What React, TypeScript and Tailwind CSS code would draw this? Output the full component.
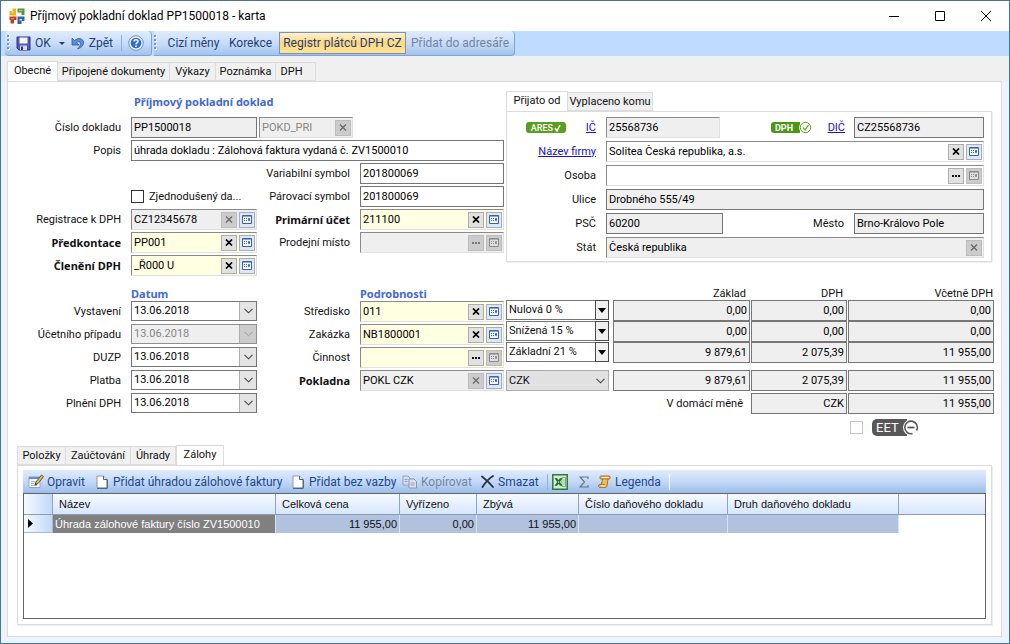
import type { ReactNode } from 'react';
import clsx from 'clsx';

const SANS = 'font-["Roboto","Noto_Sans",sans-serif]';
const STRONG = 'font-bold font-["Noto_Sans","Open_Sans",sans-serif]';

/* ---------- icons ---------- */

function AppLogo() {
  return (
    <svg width="16" height="16" viewBox="0 0 16 16" aria-hidden="true">
      <path d="M.5 3h3V.5h3.500v7h-6.500z" fill="#e9b41c" />
      <path d="M2 4.500h2.500V3H3.500z" fill="#fff0a0" />
      <path d="M8.500.5h7v6.500h-3V4.500H8.500z" fill="#55943a" />
      <path d="M10 2h3.500v1.200H10z" fill="#a9cf90" />
      <path d="M.5 8.500h7v3.500H5v3.500H1.500V12H.5z" fill="#c43d1c" />
      <path d="M2 10h3v1.200H2z" fill="#ea8a62" />
      <path d="M8.500 8.500h7v4.500h-3v3h-4z" fill="#2c64ad" />
      <path d="M10.500 11h2.500v1.500h-2.500z" fill="#d4e6fa" />
    </svg>
  );
}

function SaveIcon() {
  return (
    <svg width="15" height="15" viewBox="0 0 15 15" aria-hidden="true">
      <path d="M1 1h13v13H3l-2-2z" fill="#5259bd" stroke="#2c3188" />
      <path d="M3.500 1.500h8v6h-8z" fill="#f4f7ff" />
      <path d="M4 9.500h7V14H4z" fill="#d5d9ea" />
      <path d="M5 10.500h2V14H5z" fill="#2c3188" />
    </svg>
  );
}

function UndoIcon() {
  return (
    <svg width="14" height="14" viewBox="0 0 14 14" aria-hidden="true">
      <path d="M1 2v7h7L5.600 6.600C8 4.600 10 6 9.300 8.400 9 10 8 11.500 6.500 12.800 10.500 12 12.800 9 12.500 6 12 2.500 7 1.200 3.600 4.600z" fill="#5f8fdb" stroke="#2b57a8" strokeWidth=".8" />
    </svg>
  );
}

function HelpIcon() {
  return (
    <svg width="16" height="16" viewBox="0 0 16 16" aria-hidden="true">
      <circle cx="8" cy="8" r="7.300" fill="#e9f0fb" stroke="#6f8fc4" />
      <circle cx="8" cy="8" r="5.300" fill="#2f6bc8" />
      <path d="M6 6.600C6 4.200 10 4.200 10 6.400 10 7.800 8 7.900 8 9.400" fill="none" stroke="#fff" strokeWidth="1.500" />
      <path d="M7.200 10.400h1.600V12H7.200z" fill="#fff" />
    </svg>
  );
}

function EditIcon() {
  return (
    <svg width="16" height="15" viewBox="0 0 16 15" className="shrink-0" aria-hidden="true">
      <path d="M1 3h11v10.500H1z" fill="#fff" stroke="#8ea6cc" />
      <path d="M1 3h11v2H1z" fill="#5b8ddb" />
      <path d="M3 7.500h5M3 9.500h3M3 11.500h6" stroke="#9cb4dc" />
      <path d="M7 11l1-3 5.500-7 2 1.600-5.500 7z" fill="#e2bd4c" stroke="#54493a" strokeWidth=".9" />
      <path d="M7 11l.6-2 1.500 1.100z" fill="#222" />
    </svg>
  );
}

function PageIcon() {
  return (
    <svg width="12" height="14" viewBox="0 0 12 14" className="shrink-0" aria-hidden="true">
      <path d="M1 1h6.500L11 4.500V13H1z" fill="#fff" stroke="#8b98b0" />
      <path d="M7.500 1v3.500H11" fill="#dfe6f2" stroke="#4e5f80" />
      <path d="M11.300 4.500v8.800H1" fill="none" stroke="#44526e" />
    </svg>
  );
}

function CopyIcon() {
  return (
    <svg width="15" height="14" viewBox="0 0 15 14" className="shrink-0" aria-hidden="true">
      <path d="M1 1h5l2 2v7H1z" fill="#d5deec" stroke="#94a2b8" />
      <path d="M7 4h5l2.500 2.500V13H7z" fill="#dbe3ef" stroke="#8896ae" />
      <path d="M2.500 4.500h3M2.500 6.500h3M8.500 8h4M8.500 10h4" stroke="#94a2b8" />
    </svg>
  );
}

function DeleteIcon() {
  return (
    <svg width="13" height="13" viewBox="0 0 13 13" className="shrink-0" aria-hidden="true">
      <path d="M1 1.500c4 3 8 7 11 10.500M12 1C8 3.500 4 8 1.500 12" fill="none" stroke="#2b3140" strokeWidth="1.800" strokeLinecap="round" />
    </svg>
  );
}

function ExcelIcon() {
  return (
    <svg width="16" height="16" viewBox="0 0 16 16" aria-hidden="true">
      <path d="M.8.8h14.400v14.400H.8z" fill="#d4ecd0" stroke="#2c7a36" strokeWidth="1.500" />
      <path d="M10 3.500h3.500v9H10z" fill="#fff" stroke="#5a9f5f" strokeWidth=".8" />
      <path d="M11 6h2M11 8h2M11 10h2" stroke="#5a9f5f" strokeWidth=".8" />
      <path d="M3 4.500h2l5 7H8zM10 4.500H8l-5 7h2z" fill="#1e6b2b" stroke="#1e6b2b" strokeWidth=".6" />
    </svg>
  );
}

function SigmaIcon() {
  return (
    <svg width="10" height="12" viewBox="0 0 10 12" aria-hidden="true">
      <path d="M9 3V1H1l4.500 5L1 11h8V9" fill="none" stroke="#6b7280" strokeWidth="1.200" />
    </svg>
  );
}

function ScrollIcon() {
  return (
    <svg width="13" height="13" viewBox="0 0 13 13" className="shrink-0" aria-hidden="true">
      <path d="M3 1h8c1.600 0 1.600 3 0 3h-1l-1 6.500c0 1.200-.6 1.900-2 1.900H1.800c-1.600 0-1.600-3 0-3H3.400L4.600 4H3C1.500 4 1.500 1 3 1z" fill="#f6bb55" stroke="#9a6420" strokeWidth=".9" />
      <path d="M4 2.500h6.500M3 11h4" stroke="#fff3cf" />
      <path d="M4.600 4H10M3.400 9.400h3.400" stroke="#9a6420" strokeWidth=".8" />
    </svg>
  );
}

function LookupGlyph({ disabled }: { disabled?: boolean }) {
  const ink = disabled ? '#8b8b8b' : '#3e62a8';
  return (
    <svg width="10" height="9" viewBox="0 0 10 9" aria-hidden="true">
      <path d="M.5.5h9v8h-9z" fill={disabled ? '#dedede' : '#f2f7ff'} stroke={ink} />
      <path d="M1 1h8v1H1z" fill={ink} opacity=".55" />
      <path d="M2 3.500h1M2 5.500h1M4 3.500h1M4 5.500h1" stroke={ink} />
      <path d="M6.500 3.500h1v2h-1z" fill="none" stroke={ink} />
    </svg>
  );
}

function CrossGlyph({ disabled }: { disabled?: boolean }) {
  return (
    <svg width="8" height="7" viewBox="0 0 8 7" aria-hidden="true">
      <path d="M1 .5l6 6M7 .5l-6 6" stroke={disabled ? '#6a6a6a' : '#000'} strokeWidth={disabled ? 1.3 : 1.7} />
    </svg>
  );
}

function DotsGlyph({ disabled }: { disabled?: boolean }) {
  return (
    <svg width="8" height="2" viewBox="0 0 8 2" aria-hidden="true">
      <path d="M0 0h2v2H0zM3 0h2v2H3zM6 0h2v2H6z" fill={disabled ? '#777' : '#111'} />
    </svg>
  );
}

function Chevron({ disabled }: { disabled?: boolean }) {
  return (
    <svg width="9" height="6" viewBox="0 0 9 6" aria-hidden="true">
      <path d="M.5 .8l4 4 4-4" fill="none" stroke={disabled ? '#a8a8a8' : '#444'} strokeWidth="1.100" />
    </svg>
  );
}

/* ---------- form parts ---------- */

type ButtonKind = 'clear' | 'clear-off' | 'dots' | 'dots-off' | 'lookup' | 'lookup-off';

const buttonNames: Record<ButtonKind, string> = {
  clear: 'Vymazat',
  'clear-off': 'Vymazat',
  dots: 'Vybrat',
  'dots-off': 'Vybrat',
  lookup: 'Otevřít kartu',
  'lookup-off': 'Otevřít kartu',
};

function FieldButton({ kind }: { kind: ButtonKind }) {
  const off = kind.endsWith('-off');
  return (
    <button
      type="button"
      aria-label={buttonNames[kind]}
      disabled={off}
      className={clsx(
        'flex h-4 w-4 shrink-0 items-center justify-center border',
        off && 'border-[#bcbcbc] bg-[#cccccc]',
        !off && kind !== 'lookup' && 'border-[#adadad] bg-[#e1e1e1]',
        kind === 'lookup' && 'border-[#a3adbd] bg-[#dce8fa]',
      )}
    >
      {kind.startsWith('clear') && <CrossGlyph disabled={off} />}
      {kind.startsWith('dots') && <DotsGlyph disabled={off} />}
      {kind.startsWith('lookup') && <LookupGlyph disabled={off} />}
    </button>
  );
}

type FieldProps = {
  id: string;
  value?: string;
  label?: string;
  tone?: 'white' | 'grey' | 'yellow';
  sunken?: boolean;
  muted?: boolean;
  right?: boolean;
  buttons?: ButtonKind[];
  className?: string;
};

function Field({ id, value = '', label, tone = 'white', sunken, muted, right, buttons, className }: FieldProps) {
  return (
    <div
      className={clsx(
        'flex h-[21px] min-w-0 items-center gap-0.5 border',
        sunken ? 'border-t-[#8a8a8a] border-r-[#e0e0e0] border-b-[#e0e0e0] border-l-[#8a8a8a]' : 'border-[#767676]',
        tone === 'white' && 'bg-white',
        tone === 'grey' && 'bg-[#efefef]',
        tone === 'yellow' && 'bg-[#ffffe1]',
        buttons && 'pr-px',
        className,
      )}
    >
      <input
        id={id}
        aria-label={label}
        defaultValue={value}
        readOnly={tone === 'grey'}
        className={clsx(
          'h-full w-full min-w-0 flex-1 bg-transparent px-0.5 outline-none',
          muted ? 'text-[#868686]' : 'text-black',
          right && 'text-right',
        )}
      />
      {buttons?.map((kind) => <FieldButton key={kind} kind={kind} />)}
    </div>
  );
}

type RowProps = { id: string; label: string; bold?: boolean; wide: string; children: ReactNode };

function Row({ id, label, bold, wide, children }: RowProps) {
  return (
    <div className="flex h-[21px] items-center gap-2.5">
      <label htmlFor={id} className={clsx('shrink-0 text-right whitespace-nowrap', wide, bold && STRONG)}>
        {label}
      </label>
      {children}
    </div>
  );
}

const COL_A = 'w-[113px]';
const COL_B = 'w-[93px]';

function DateField({ id, value, disabled }: { id: string; value: string; disabled?: boolean }) {
  return (
    <div className={clsx('flex h-5 w-[126px] self-start border', disabled ? 'border-[#8f8f8f] bg-[#efefef]' : 'border-[#767676] bg-white')}>
      <input
        id={id}
        defaultValue={value}
        disabled={disabled}
        className={clsx('min-w-0 flex-1 bg-transparent px-0.5 outline-none', disabled ? 'text-[#868686]' : 'text-black')}
      />
      <button
        type="button"
        aria-label="Kalendář"
        disabled={disabled}
        className={clsx('flex w-[17px] items-center justify-center border-l border-[#adadad]', disabled ? 'bg-[#cccccc]' : 'bg-[#e4e4e4]')}
      >
        <Chevron disabled={disabled} />
      </button>
    </div>
  );
}

function VatSelect({ value, label }: { value: string; label: string }) {
  return (
    <div className="relative w-[103px] shrink-0">
      <select aria-label={label} className="h-5 w-full appearance-none border border-[#767676] bg-white px-0.5 outline-none">
        <option>{value}</option>
      </select>
      <span className="pointer-events-none absolute top-0 right-0 flex h-5 w-[14px] items-center justify-center border border-[#4a4a4a] bg-[#efefef]">
        <svg width="8" height="5" viewBox="0 0 8 5" aria-hidden="true">
          <path d="M0 0h8L4 5z" fill="#000" />
        </svg>
      </span>
    </div>
  );
}

function Heading({ children, className }: { children: ReactNode; className?: string }) {
  return <h2 className={clsx('h-3.5 text-[11px] leading-[14px] whitespace-nowrap text-[#4169d0]', STRONG, className)}>{children}</h2>;
}

function Tab({ children, active, className }: { children: ReactNode; active?: boolean; className?: string }) {
  return (
    <button
      type="button"
      role="tab"
      aria-selected={!!active}
      className={clsx(
        'shrink-0 border-[#dcdcdc] whitespace-nowrap',
        active ? 'h-[21px] border border-b-0 bg-white pb-0.5' : 'h-[19px] border-t border-r border-b bg-[#f0f0f0]',
        className,
      )}
    >
      {children}
    </button>
  );
}

/* ---------- window chrome ---------- */

function TitleBar() {
  return (
    <header className="flex h-[30px] items-center bg-white pl-2">
      <AppLogo />
      <h1 className="ml-[5px] flex-1 text-xs whitespace-nowrap text-black">Příjmový pokladní doklad PP1500018 - karta</h1>
      <button type="button" aria-label="Minimalizovat" className="flex h-full w-[46px] items-center justify-center">
        <svg width="10" height="10" viewBox="0 0 10 10"><path d="M0 5.500h10" stroke="#000" /></svg>
      </button>
      <button type="button" aria-label="Maximalizovat" className="flex h-full w-[46px] items-center justify-center">
        <svg width="10" height="10" viewBox="0 0 10 10"><path d="M.5.5h9v9h-9z" fill="none" stroke="#000" /></svg>
      </button>
      <button type="button" aria-label="Zavřít" className="flex h-full w-[46px] items-center justify-center">
        <svg width="10" height="10" viewBox="0 0 10 10"><path d="M0 0l10 10M10 0L0 10" stroke="#000" /></svg>
      </button>
    </header>
  );
}

function Grip() {
  return (
    <svg width="3" height="16" viewBox="0 0 3 16" className="shrink-0" aria-hidden="true">
      <path d="M1 1h2v2H1zM1 5h2v2H1zM1 9h2v2H1zM1 13h2v2H1z" fill="#fff" />
      <path d="M0 0h2v2H0zM0 4h2v2H0zM0 8h2v2H0zM0 12h2v2H0z" fill="#6f93cc" />
    </svg>
  );
}

function MainToolbar() {
  const strip = 'flex h-full items-center rounded-r-sm border-r border-b border-[#7ba3dc] bg-linear-to-b from-[#dfebfd] via-[#c9ddf8] to-[#a3c3ee]';
  return (
    <div className="flex h-[25px] gap-0.5 bg-[#bfdbff] pl-1 text-xs text-[#1e3f7a]" role="toolbar">
      <div className={clsx(strip, 'w-[147px] rounded-l-sm pl-0.5')}>
        <Grip />
        <button type="button" className="ml-1.5 flex items-center gap-1"><SaveIcon />OK</button>
        <button type="button" aria-label="Další možnosti" className="ml-2 flex h-4 items-center">
          <svg width="6" height="3" viewBox="0 0 6 3"><path d="M0 0h6L3 3z" fill="#1e3f7a" /></svg>
        </button>
        <button type="button" className="ml-1.5 flex items-center gap-1"><UndoIcon />Zpět</button>
        <span className="ml-2 h-4 w-px bg-[#8fb1e2]" />
        <button type="button" aria-label="Nápověda" className="ml-1.5"><HelpIcon /></button>
      </div>
      <div className={clsx(strip, 'w-[361px]')}>
        <Grip />
        <button type="button" className="ml-2 flex-1 whitespace-nowrap">Cizí měny</button>
        <button type="button" className="flex-1 whitespace-nowrap">Korekce</button>
        <button type="button" className="h-[22px] w-[127px] border border-[#7f8fae] bg-linear-to-b from-[#fff1cf] via-[#ffd77a] to-[#ffe596] whitespace-nowrap">
          Registr plátců DPH CZ
        </button>
        <button type="button" disabled className="w-[108px] whitespace-nowrap text-[#73839f]">Přidat do adresáře</button>
      </div>
    </div>
  );
}

/* ---------- sections ---------- */

function PartnerPanel() {
  const label = 'w-[89px]';
  return (
    <section className="mt-[9px] mr-[9px] ml-0.5 flex min-w-0 flex-1 flex-col">
      <div className="flex items-end" role="tablist">
        <Tab active className="-mb-px w-[62px]">Přijato od</Tab>
        <Tab className="w-[85px]">Vyplaceno komu</Tab>
      </div>
      <div className="flex flex-col gap-[3px] border border-[#dcdcdc] pt-[5px] pr-[7px] pb-[3px] shadow-[1px_1px_0_#f0f0f0]">
        <div className="flex h-[21px] items-center">
          <span className={clsx('flex shrink-0 items-center justify-end', label)}>
            <span className="mr-5 flex h-[11px] w-10 items-center justify-center gap-px rounded-[3px] bg-[#5a9e1e] text-[9px] font-medium text-white">
              ARES
              <svg width="7" height="8" viewBox="0 0 7 8" aria-hidden="true"><path d="M1 4l2 3 3-6" fill="none" stroke="#fff" strokeWidth="1.600" /></svg>
            </span>
            <a href="#ic" className="text-[#1414c8] underline">IČ</a>
          </span>
          <Field id="ic" label="IČ" value="25568736" tone="grey" sunken className="ml-2.5 w-[114px]" />
          <span className="ml-auto flex h-[11px] w-[41px] items-center">
            <span className="flex h-full w-[29px] items-center rounded-l-[3px] bg-[#4c9616] pl-1 text-[9px] font-bold text-white">DPH</span>
            <svg width="13" height="13" viewBox="0 0 13 13" className="-ml-px shrink-0" aria-hidden="true">
              <circle cx="6.500" cy="6.500" r="6.500" fill="#fff" />
              <circle cx="6.500" cy="6.500" r="5.200" fill="#fff" stroke="#5a9e1e" />
              <path d="M4 6.500l2 2.500 3.500-5" fill="none" stroke="#5a9e1e" strokeWidth="1.200" />
            </svg>
          </span>
          <a href="#dic" className="ml-[15px] w-[18px] text-right text-[#1414c8] underline">DIČ</a>
          <Field id="dic" label="DIČ" value="CZ25568736" tone="grey" className="ml-[9px] w-[130px]" />
        </div>
        <div className="flex h-[21px] items-center gap-2.5">
          <a href="#firma" className={clsx('shrink-0 text-right whitespace-nowrap text-[#1414c8] underline', label)}>Název firmy</a>
          <Field id="firma" label="Název firmy" value="Solitea Česká republika, a.s." sunken buttons={['clear', 'lookup']} className="flex-1" />
        </div>
        <Row id="osoba" label="Osoba" wide={label}>
          <Field id="osoba" sunken buttons={['dots', 'lookup-off']} className="flex-1" />
        </Row>
        <Row id="ulice" label="Ulice" wide={label}>
          <Field id="ulice" value="Drobného 555/49" tone="grey" className="flex-1" />
        </Row>
        <Row id="psc" label="PSČ" wide={label}>
          <Field id="psc" value="60200" tone="grey" className="w-[117px]" />
          <label htmlFor="mesto" className="ml-auto">Město</label>
          <Field id="mesto" value="Brno-Královo Pole" tone="grey" className="w-[130px]" />
        </Row>
        <Row id="stat" label="Stát" wide={label}>
          <Field id="stat" value="Česká republika" tone="grey" sunken buttons={['clear-off']} className="flex-1" />
        </Row>
      </div>
    </section>
  );
}

function DocumentFields() {
  return (
    <section className="flex shrink-0 flex-col gap-0.5 pt-[13px]">
      <Heading className="mb-1.5 pl-[126px]">Příjmový pokladní doklad</Heading>
      <Row id="cislo" label="Číslo dokladu" wide={COL_A}>
        <div className="flex gap-0.5">
          <Field id="cislo" value="PP1500018" tone="grey" className="w-[126px]" />
          <Field id="rada" label="Řada" value="POKD_PRI" tone="grey" sunken muted buttons={['clear-off']} className="w-[94px]" />
        </div>
      </Row>
      <Row id="popis" label="Popis" wide={COL_A}>
        <Field id="popis" value="úhrada dokladu : Zálohová faktura vydaná č. ZV1500010" className="w-[373px]" />
      </Row>
      <div className="flex">
        <div className="flex flex-col gap-0.5 pt-[23px]">
          <label className="ml-[123px] flex h-[21px] items-center gap-[5px] whitespace-nowrap">
            <input type="checkbox" className="h-[13px] w-[13px] appearance-none border border-[#333] bg-white" />
            Zjednodušený da...
          </label>
          <Row id="registrace" label="Registrace k DPH" wide={COL_A}>
            <Field id="registrace" value="CZ12345678" tone="grey" sunken buttons={['clear-off', 'lookup']} className="w-[126px]" />
          </Row>
          <Row id="predkontace" label="Předkontace" bold wide={COL_A}>
            <Field id="predkontace" value="PP001" tone="yellow" sunken buttons={['clear', 'lookup']} className="w-[126px]" />
          </Row>
          <Row id="cleneni" label="Členění DPH" bold wide={COL_A}>
            <Field id="cleneni" value="_Ř000 U" tone="yellow" sunken buttons={['clear', 'lookup']} className="w-[126px]" />
          </Row>
        </div>
        <div className="flex flex-col gap-0.5">
          <Row id="variabilni" label="Variabilní symbol" wide={COL_B}>
            <Field id="variabilni" value="201800069" className="w-36" />
          </Row>
          <Row id="parovaci" label="Párovací symbol" wide={COL_B}>
            <Field id="parovaci" value="201800069" className="w-36" />
          </Row>
          <Row id="ucet" label="Primární účet" bold wide={COL_B}>
            <Field id="ucet" value="211100" tone="yellow" sunken buttons={['clear', 'lookup']} className="w-36" />
          </Row>
          <Row id="misto" label="Prodejní místo" wide={COL_B}>
            <Field id="misto" tone="grey" sunken buttons={['dots-off', 'lookup-off']} className="w-36" />
          </Row>
        </div>
      </div>
    </section>
  );
}

const dates = [
  { id: 'vystaveni', label: 'Vystavení' },
  { id: 'ucetni', label: 'Účetního případu', disabled: true },
  { id: 'duzp', label: 'DUZP' },
  { id: 'platba', label: 'Platba' },
  { id: 'plneni', label: 'Plnění DPH' },
];

const vatRows = [
  { rate: 'Nulová 0 %', base: '0,00', vat: '0,00', total: '0,00' },
  { rate: 'Snížená 15 %', base: '0,00', vat: '0,00', total: '0,00' },
  { rate: 'Základní 21 %', base: '9 879,61', vat: '2 075,39', total: '11 955,00' },
];

const AMOUNTS = 'grid flex-1 grid-cols-[137fr_96fr_146fr] gap-px';

function Amounts() {
  return (
    <section className="mr-[7px] ml-0.5 min-w-0 flex-1">
      <div className="ml-[107px] grid h-[13px] grid-cols-[137fr_96fr_146fr] gap-px text-right leading-[14px]">
        <span className="pr-1">Základ</span>
        <span className="pr-1">DPH</span>
        <span className="pr-px">Včetně DPH</span>
      </div>
      {vatRows.map((row) => (
        <div key={row.rate} className="flex items-start gap-1">
          <VatSelect value={row.rate} label="Sazba DPH" />
          <div className={AMOUNTS}>
            <Field id={`${row.rate}-base`} label="Základ" value={row.base} tone="grey" right />
            <Field id={`${row.rate}-vat`} label="DPH" value={row.vat} tone="grey" right />
            <Field id={`${row.rate}-total`} label="Včetně DPH" value={row.total} tone="grey" right />
          </div>
        </div>
      ))}
      <div className="mt-[7px] flex gap-1">
        <div className="relative w-[103px] shrink-0">
          <select aria-label="Měna" className="h-[21px] w-full appearance-none border border-[#adadad] bg-[#e1e1e1] px-0.5 outline-none">
            <option>CZK</option>
          </select>
          <span className="pointer-events-none absolute top-2 right-1"><Chevron /></span>
        </div>
        <div className={AMOUNTS}>
          <Field id="sum-base" label="Základ celkem" value="9 879,61" tone="grey" right />
          <Field id="sum-vat" label="DPH celkem" value="2 075,39" tone="grey" right />
          <Field id="sum-total" label="Celkem" value="11 955,00" tone="grey" right />
        </div>
      </div>
      <div className="mt-0.5 ml-[107px] grid grid-cols-[137fr_96fr_146fr] items-center gap-px">
        <label htmlFor="home-total" className="pr-[7px] text-right whitespace-nowrap">V domácí měně</label>
        <Field id="home-currency" label="Domácí měna" value="CZK" tone="grey" right />
        <Field id="home-total" value="11 955,00" tone="grey" right />
        <label className="col-start-3 mt-1 flex h-[17px] items-center gap-[9px] pl-0.5">
          <input type="checkbox" disabled className="h-[13px] w-[13px] appearance-none border border-[#c4c4c4] bg-white" />
          <span className="flex h-[17px] w-[47px] items-center">
            <span className="flex h-full w-[35px] shrink-0 items-center rounded-l-[5px] bg-[#585858] pl-1 text-[13px] text-white">EET</span>
            <svg width="16" height="17" viewBox="0 0 16 17" className="-ml-1 shrink-0" aria-hidden="true">
              <path d="M4 0h2L0 8.500 6 17H4z" fill="#fff" />
              <circle cx="8" cy="8.500" r="8" fill="#fff" />
              <path d="M9.500 14.600A6.300 6.300 0 1 1 13.600 11.500" fill="none" stroke="#585858" strokeWidth="1.600" />
              <path d="M4.500 8.500h7" stroke="#585858" strokeWidth="1.800" />
            </svg>
          </span>
        </label>
      </div>
    </section>
  );
}

function DatesAndDetails() {
  return (
    <div className="mt-[11px] flex">
      <div className="flex shrink-0 flex-col gap-0.5">
        <Heading className="-mb-0.5 pl-[123px]">Datum</Heading>
        {dates.map((d) => (
          <Row key={d.id} id={d.id} label={d.label} wide={COL_A}>
            <DateField id={d.id} value="13.06.2018" disabled={d.disabled} />
          </Row>
        ))}
      </div>
      <div className="flex shrink-0 flex-col gap-0.5">
        <Heading className="-mb-0.5 pl-[103px]">Podrobnosti</Heading>
        <Row id="stredisko" label="Středisko" wide={COL_B}>
          <Field id="stredisko" value="011" tone="yellow" sunken buttons={['clear', 'lookup']} className="w-36" />
        </Row>
        <Row id="zakazka" label="Zakázka" wide={COL_B}>
          <Field id="zakazka" value="NB1800001" tone="yellow" sunken buttons={['clear', 'lookup']} className="w-36" />
        </Row>
        <Row id="cinnost" label="Činnost" wide={COL_B}>
          <Field id="cinnost" tone="yellow" sunken buttons={['dots', 'lookup-off']} className="w-36" />
        </Row>
        <Row id="pokladna" label="Pokladna" bold wide={COL_B}>
          <Field id="pokladna" value="POKL CZK" tone="grey" sunken buttons={['clear-off', 'lookup']} className="w-36" />
        </Row>
      </div>
      <Amounts />
    </div>
  );
}

function GridToolbar() {
  return (
    <div className="flex h-[23px] items-center bg-linear-to-b from-[#dfebfd] via-[#c3d9f7] to-[#9dbde9] pl-[5px] text-xs whitespace-nowrap text-[#1c4690]" role="toolbar">
      <button type="button" className="flex w-[68px] items-center gap-[3px]"><EditIcon />Opravit</button>
      <button type="button" className="flex w-[196px] items-center gap-[5px]"><PageIcon />Přidat úhradou zálohové faktury</button>
      <button type="button" className="flex w-[110px] items-center gap-[5px]"><PageIcon />Přidat bez vazby</button>
      <button type="button" disabled className="flex w-[79px] items-center gap-1 text-[#7486a3]"><CopyIcon />Kopírovat</button>
      <button type="button" className="flex w-[66px] items-center gap-1"><DeleteIcon />Smazat</button>
      <span className="h-4 w-px bg-[#8fb1e2]" />
      <button type="button" aria-label="Export do Excelu" className="ml-1"><ExcelIcon /></button>
      <button type="button" aria-label="Součet" disabled className="ml-[11px]"><SigmaIcon /></button>
      <button type="button" className="ml-[9px] flex items-center gap-1"><ScrollIcon />Legenda</button>
      <span className="ml-2 h-4 w-px bg-white" />
    </div>
  );
}

function AdvancesGrid() {
  const th = 'border-r border-b border-r-[#8fa3c4] border-b-[#8d9bb5] pl-1.5 text-left font-normal whitespace-nowrap';
  const td = 'border-r border-[#d7e2f2] bg-[#b0c2dd] pr-0.5 text-right';
  return (
    <div className="min-h-[125px] flex-1 border border-[#646464] bg-white font-['Liberation_Sans',sans-serif]">
      <table className="w-full table-fixed border-separate border-spacing-0">
        <colgroup>
          <col className="w-[29px]" />
          <col className="w-[223px]" />
          <col className="w-[124px]" />
          <col className="w-[77px]" />
          <col className="w-[102px]" />
          <col className="w-[149px]" />
          <col className="w-[171px]" />
          <col />
        </colgroup>
        <thead>
          <tr className="h-[21px] bg-linear-to-b from-[#f6faff] to-[#d5e5fb]">
            <th className={clsx(th, 'bg-linear-to-r from-[#f6faff] to-[#c2d8f8]')} />
            <th className={th}>Název</th>
            <th className={th}>Celková cena</th>
            <th className={th}>Vyřízeno</th>
            <th className={th}>Zbývá</th>
            <th className={th}>Číslo daňového dokladu</th>
            <th className={th}>Druh daňového dokladu</th>
            <th className="border-b border-[#8d9bb5]" />
          </tr>
        </thead>
        <tbody>
          <tr className="h-[18px]">
            <td className="border-r border-b border-[#a9b9d2] bg-linear-to-r from-[#f6faff] to-[#c2d8f8] pl-1">
              <svg width="5" height="9" viewBox="0 0 5 9" aria-hidden="true"><path d="M0 0l5 4.500L0 9z" fill="#000" /></svg>
            </td>
            <td className="border-r border-[#d7e2f2] bg-[#808080] pl-0.5 whitespace-nowrap text-white">Úhrada zálohové faktury číslo ZV1500010</td>
            <td className={td}>11 955,00</td>
            <td className={td}>0,00</td>
            <td className={td}>11 955,00</td>
            <td className={td} />
            <td className={td} />
            <td />
          </tr>
        </tbody>
      </table>
    </div>
  );
}

export default function App() {
  return (
    <main className={clsx(SANS, 'flex min-h-screen flex-col border border-t-[#4a7592] border-r-[#2a7fb5] border-b-[#3b7aa6] border-l-[#4a7592] bg-[#ecf3fb] text-[11px] leading-[14px] text-[#111]')}>
      <TitleBar />
      <MainToolbar />
      <div className="flex flex-1 flex-col pb-1.5">
        <div className="flex items-end bg-[#f0f0f0] pt-[5px] pl-1.5" role="tablist">
          <Tab active className="-mb-px w-[51px]">Obecné</Tab>
          <Tab className="w-28">Připojené dokumenty</Tab>
          <Tab className="w-[46px]">Výkazy</Tab>
          <Tab className="w-[60px]">Poznámka</Tab>
          <Tab className="w-10 pr-2">DPH</Tab>
        </div>
        <div className="mr-[7px] ml-1.5 flex flex-1 flex-col border border-[#dcdcdc] bg-white">
          <div className="flex">
            <DocumentFields />
            <PartnerPanel />
          </div>
          <DatesAndDetails />
          <section className="mt-[9px] mr-[9px] mb-[11px] ml-[9px] flex flex-1 flex-col">
            <div className="flex items-end" role="tablist">
              <Tab className="w-[49px] border-l">Položky</Tab>
              <Tab className="w-[65px]">Zaúčtování</Tab>
              <Tab className="w-[45px]">Úhrady</Tab>
              <Tab active className="-mb-px w-12">Zálohy</Tab>
            </div>
            <div className="flex flex-1 flex-col border border-[#dcdcdc] px-[5px] pt-1 pb-[5px] shadow-[1px_1px_0_#f0f0f0]">
              <GridToolbar />
              <AdvancesGrid />
            </div>
          </section>
        </div>
      </div>
    </main>
  );
}
